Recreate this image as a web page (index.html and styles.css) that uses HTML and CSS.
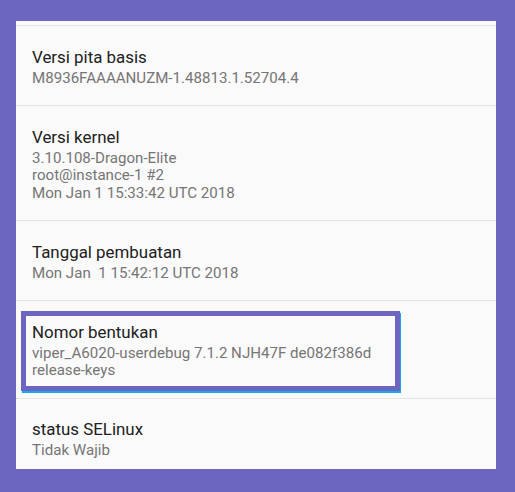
FILE: index.html
```html
<!DOCTYPE html>
<html lang="id">
<head>
    <meta charset="UTF-8">
    <meta name="viewport" content="width=device-width, initial-scale=1.0">
    <title>Tentang ponsel</title>
    <link rel="stylesheet" href="styles.css">
</head>
<body>
    <div class="panel">
        <div class="scroll-top"></div>

        <div class="pref">
            <div class="pref-title">Versi pita basis</div>
            <div class="pref-summary">M8936FAAAANUZM-1.48813.1.52704.4</div>
        </div>

        <div class="pref">
            <div class="pref-title">Versi kernel</div>
            <div class="pref-summary">3.10.108-Dragon-Elite<br>root@instance-1 #2<br>Mon Jan 1 15:33:42 UTC 2018</div>
        </div>

        <div class="pref">
            <div class="pref-title">Tanggal pembuatan</div>
            <div class="pref-summary">Mon Jan &nbsp;1 15:42:12 UTC 2018</div>
        </div>

        <div class="pref highlighted">
            <div class="pref-title">Nomor bentukan</div>
            <div class="pref-summary">viper_A6020-userdebug 7.1.2 NJH47F de082f386d<br>release-keys</div>
            <div class="mark"></div>
        </div>

        <div class="pref">
            <div class="pref-title">status SELinux</div>
            <div class="pref-summary">Tidak Wajib</div>
        </div>
    </div>
</body>
</html>
```

FILE: styles.css
```css
body {
    margin: 0;
    padding: 21px 0 0 16px;
    background: #6d66c0;
    font-family: Roboto, "Noto Sans", sans-serif;
    height: 492px;
    box-sizing: border-box;
    overflow: hidden;
}
.panel {
    width: 480px;
    height: 448px;
    background: #fafafa;
    overflow: hidden;
}
.scroll-top {
    height: 4px;
}
.pref {
    position: relative;
    border-top: 1px solid #e4e4e4;
    padding: 20.5px 16px 18px 16px;
}
.pref-title {
    font-size: 16.9px;
    line-height: 20px;
    color: #212121;
    margin-bottom: 3px;
}
.pref-summary {
    font-size: 15.1px;
    line-height: 17.5px;
    color: #757575;
}
/* annotation box around the build number */
.mark {
    position: absolute;
    left: 5px;
    top: 10px;
    width: 369px;
    height: 70px;
    border: 5px solid #6d66c0;
    box-shadow: 1px 2px 0 #14a8ee;
}
```
